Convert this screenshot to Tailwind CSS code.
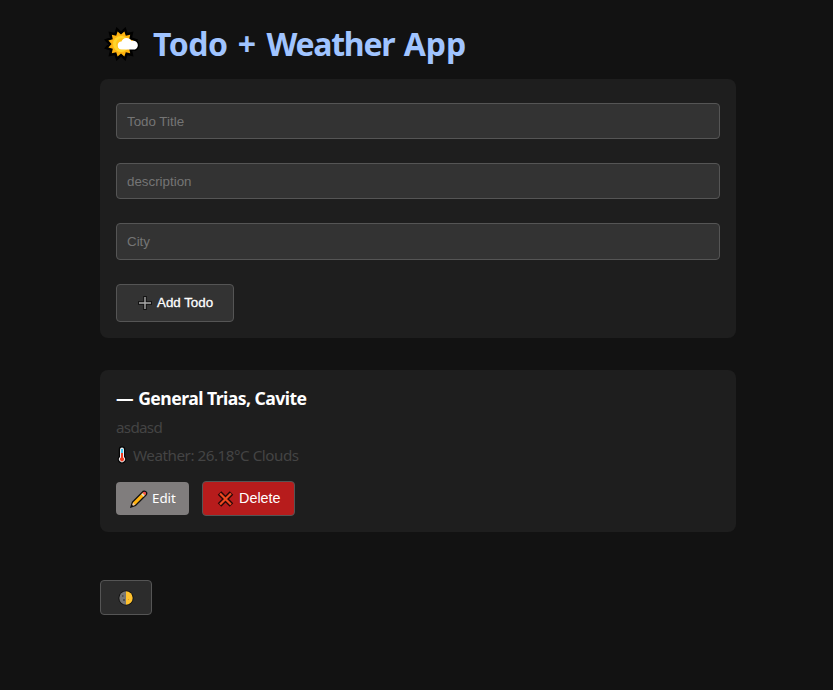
<!DOCTYPE html>
<html lang="en">
<head>
<meta charset="utf-8">
<title>Todo + Weather App</title>
<script src="https://cdn.jsdelivr.net/npm/@tailwindcss/browser@4"></script>
</head>
<body class="min-h-screen overflow-hidden bg-[#121212] font-['Noto_Sans',sans-serif] text-white">
<main class="ml-[100px] w-[636px]">
  <h1 class="flex h-[79px] items-start pt-[22px] text-[#a0c4ff]">
    <svg class="ml-1 mt-[5px] h-[34px] w-[36px] shrink-0" viewBox="-17 -17 36 34">
      <path d="M9.5 0L12.6 3.4L8.2 4.8L9.2 9.2L4.8 8.2L3.4 12.6L0 9.5L-3.4 12.6L-4.8 8.2L-9.2 9.2L-8.2 4.8L-12.6 3.4L-9.5 0L-12.6-3.4L-8.2-4.8L-9.2-9.2L-4.8-8.2L-3.4-12.6L0-9.5L3.4-12.6L4.8-8.2L9.2-9.2L8.2-4.8L12.6-3.4Z" fill="#000" stroke="#000" stroke-width="5"/>
      <path d="M1 5.500a4 4 0 0 1-.5-8A5.500 5.500 0 0 1 10.500-3A4.300 4.300 0 0 1 14 5.500Z" stroke="#000" stroke-width="3" fill="#000"/>
      <path d="M9.500 0L12.600 3.400L8.200 4.800L9.200 9.200L4.800 8.200L3.400 12.600L0 9.500L-3.400 12.600L-4.800 8.200L-9.200 9.200L-8.200 4.800L-12.600 3.400L-9.500 0L-12.600-3.400L-8.200-4.800L-9.200-9.200L-4.800-8.200L-3.400-12.600L0-9.500L3.400-12.600L4.800-8.200L9.200-9.200L8.200-4.800L12.600-3.400Z" fill="#ffb410"/>
      <circle r="8" fill="#ffd52b"/><circle r="6" cx="1" fill="#ffc419"/>
      <path d="M1 5.500a4 4 0 0 1-.5-8A5.500 5.500 0 0 1 10.500-3A4.300 4.300 0 0 1 14 5.500Z" fill="#fff"/>
    </svg>
    <span class="ml-[13px] whitespace-nowrap text-[32px] leading-[44px] font-bold"><span class="tracking-[-0.5px]">Todo</span><span class="ml-[2px] mr-[2px]"> + </span><span class="tracking-[-1.250px]">Weather</span><span class="ml-[1px]"> App</span></span>
  </h1>
  <form class="flex h-[259px] flex-col items-start rounded-lg bg-[#1e1e1e] px-4 pt-6 font-['Liberation_Sans',sans-serif] text-[13.333px]">
    <input class="h-9 w-full rounded border border-[#555] bg-[#333] px-[10px] placeholder-[#757575]" placeholder="Todo Title">
    <input class="mt-6 h-9 w-full rounded border border-[#555] bg-[#333] px-[10px] placeholder-[#757575]" placeholder="description">
    <input class="mt-6 h-[37px] w-full rounded border border-[#555] bg-[#333] px-[10px] placeholder-[#757575]" placeholder="City">
    <button type="button" class="mt-6 flex h-[38px] w-[118px] items-center rounded border border-[#555] bg-[#333] pl-5">
      <svg class="h-4 w-4" viewBox="0 0 16 16" fill="none"><path d="M8 1v14M1 8h14" stroke="#111" stroke-width="3.500"/><path d="M8 2v12M2 8h12" stroke="#aaa" stroke-width="1.400"/></svg>
      <span class="ml-1 whitespace-nowrap [-webkit-text-stroke:0.3px_white]">Add Todo</span>
    </button>
  </form>
  <section class="mt-8 h-[162px] rounded-lg bg-[#1e1e1e] px-4 pt-4">
    <h2 class="h-6 whitespace-nowrap text-[17.600px] leading-6 font-bold"><span>— </span><span class="tracking-[-0.540px]">General Trias, Cavite</span></h2>
    <p class="mt-[5px] h-6 text-[15.200px] leading-6 tracking-[-0.700px] text-[#444]">asdasd</p>
    <p class="mt-1 flex h-6 items-center text-[15.200px] leading-6 text-[#444]">
      <svg class="h-[18px] w-3" viewBox="0 0 12 18"><path d="M4 3.500a2 2 0 0 1 4 0V11a3 3 0 1 1-4 0Z" fill="#e8eef2" stroke="#050505" stroke-width="2.500" paint-order="stroke"/><path d="M5 3h2v4H5Z" fill="#3fc5ed"/><path d="M5 7h2v4.500a2 2 0 1 1-2 0Z" fill="#f03a20"/></svg>
      <span class="ml-[5px] whitespace-nowrap tracking-[-0.460px]">Weather: 26.18°C Clouds</span>
    </p>
    <div class="mt-[14px] flex h-[35px] items-center">
      <button class="flex h-[33px] w-[73px] items-center rounded bg-[#807d7d] pl-[14px] text-[13.333px]">
        <svg class="h-[18px] w-[18px]" viewBox="0 0 18 18"><path d="M1 17L2.500 12L13 1.500Q15 .5 16.500 2.500Q17 4 16 5L5.500 15.500Z" fill="#ffb30f" stroke="#111" stroke-width="1.400"/><path d="M2 16L3 12.500L5.200 15Z" fill="#e8c7b0"/><path d="M11.800 3.800L14.200 6.200" stroke="#ddd" stroke-width="1.500"/><path d="M12.700 2.700Q14.500 1 15.800 2.700Q16.500 4 15 5Z" fill="#f2485c"/><path d="M1.200 16.800L2 14.800L3.200 16Z" fill="#111"/></svg>
        <span class="ml-1 whitespace-nowrap">Edit</span>
      </button>
      <button class="ml-[13px] flex h-[35px] w-[93px] items-center rounded border border-[#555] bg-[#b71c1c] pl-[14px] font-['Liberation_Sans',sans-serif] text-[14.400px]">
        <svg class="h-[18px] w-[18px]" viewBox="0 0 18 18"><path d="M2.500 3L14.500 15M14.500 3L2.500 15" stroke="#260808" stroke-width="5"/><path d="M3 3.500L14 14.500M14 3.500L3 14.500" stroke="#f04a20" stroke-width="2.200"/></svg>
        <span class="ml-1 mt-px whitespace-nowrap">Delete</span>
      </button>
    </div>
  </section>
  <button aria-label="Toggle theme" class="mt-12 flex h-[35px] w-[52px] items-center justify-center rounded border border-[#555] bg-[#2c2c2c]">
    <svg class="h-4 w-4" viewBox="0 0 16 16"><circle cx="8" cy="8" r="7.600" fill="#111"/><path d="M8 1.300a6.700 6.700 0 0 0 0 13.400Z" fill="#777"/><path d="M8 1.300a6.700 6.700 0 0 1 0 13.400Z" fill="#ffc22e"/><path d="M4 5h1.500v2H4ZM5 9h2v2H5Z" fill="#505050"/><path d="M10 9h1v1h-1Z" fill="#e29b20"/></svg>
  </button>
</main>
</body>
</html>
